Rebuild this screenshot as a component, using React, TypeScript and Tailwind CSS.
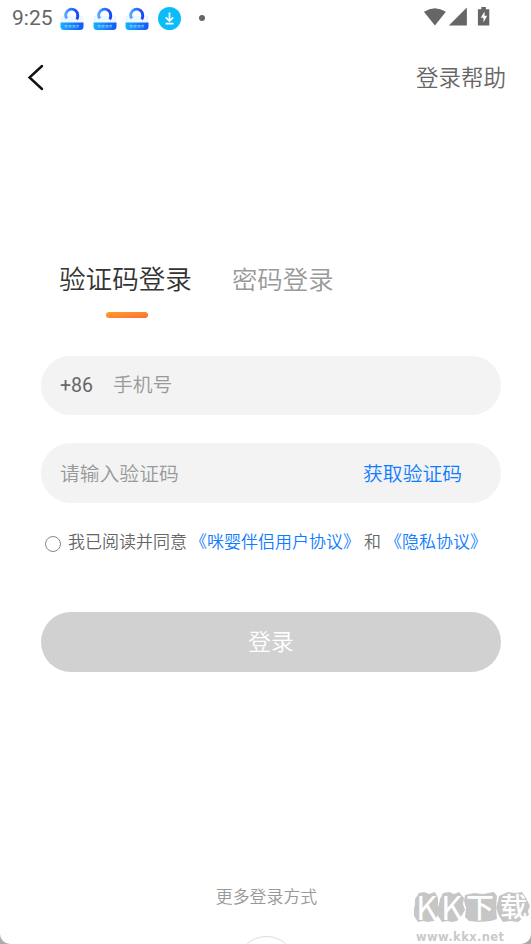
import { useState } from "react";

// Ícone do app que aparece nas notificações
function AppBadge() {
  return (
    <svg width="24" height="24" viewBox="0 0 24 24">
      <defs>
        <linearGradient id="arc" x1="0" y1="0" x2="1" y2="0">
          <stop offset="0" stopColor="#5aa6ff" />
          <stop offset="0.4" stopColor="#2f7bff" />
          <stop offset="1" stopColor="#1546f5" />
        </linearGradient>
        <linearGradient id="base" x1="0" y1="0" x2="1" y2="0">
          <stop offset="0" stopColor="#12b4ff" />
          <stop offset="1" stopColor="#1557f5" />
        </linearGradient>
      </defs>
      <rect x="0.5" y="9" width="23" height="8" fill="#eef7fd" />
      <path
        d="M6.7 11.5a6 6 0 1 1 11-3.200q0.200 2.500-1 4"
        fill="none"
        stroke="url(#arc)"
        strokeWidth="2.9"
      />
      <path d="M0.5 15.500h23v4a3.500 3.500 0 0 1-3.500 3.500H4a3.500 3.500 0 0 1-3.500-3.500z" fill="url(#base)" />
      <path
        d="M4.500 18.600h3M5 20h2.500M8.500 18.600h3M8.500 20h3M12.500 18.600h3M12.500 20h3M16.500 18.600h2.500M16.500 20h2"
        stroke="#a9d2ff"
        strokeWidth="0.8"
      />
    </svg>
  );
}

function StatusBar() {
  return (
    <div className="flex h-[37px] shrink-0 items-center pl-3 pr-[40px] text-[#666]">
      <span className="w-[48px] text-[21px] font-normal leading-[37px] font-[Roboto]">9:25</span>
      <div className="flex items-center gap-[8.5px]">
        <AppBadge />
        <AppBadge />
        <AppBadge />
        <svg width="24" height="24" viewBox="0 0 24 24">
          <circle cx="11.500" cy="11.500" r="11.500" fill="#0bbcfb" />
          <path
            d="M11.500 5.500v8.500M7.800 10.400l3.700 3.700 3.700-3.700M7.500 16.600h8"
            fill="none"
            stroke="#fff"
            strokeWidth="1.7"
          />
        </svg>
      </div>
      <span className="ml-[17px] -mt-0.5 size-1.5 rounded-full bg-[#666]" />
      <svg className="ml-auto -mt-[1px]" width="68" height="22" viewBox="0 0 68 22" fill="#666">
        <path d="M0.900 4.700q11-7 22 0L11.900 18.500z" />
        <path d="M43.900 0.500v18h-18z" />
        <path d="M54.900 2.200h3.400V0h4.600v2.200h3.400V18.500H54.900z" />
        <path d="M61.500 4.500v4.300h2.600l-3.600 6.700v-4.700h-2.700z" fill="#fff" />
      </svg>
    </div>
  );
}

function Watermark() {
  return (
    <div className="absolute left-[414px] top-[890px] w-[117px]">
      <svg width="117" height="36" viewBox="0 0 117 36" fill="#c6c6c6">
        <path d="M1 9l4-6 5-1 5 2 6-2 3 6v6l2 6-2 5-4 6-6 1-5-1-5 1-4-6v-7l1-5z" />
        <path d="M26 9l3-6 6-1 5 2 5-2 5 6-1 6 2 6-3 5-5 6-5 1-5-1-5 1-4-6 1-7v-5z" />
        <path d="M51 5l9-2 9 1 11-2 3 4-1 12 1 11-6 2-12 1-10-1-4-4 1-9-2-7z" />
        <path d="M85 6l9-4 7 1 7-1 4 6 4 8-2 5 1 4-6 3-5 4-8-1-7 1-4-6-3-8 2-7z" />
      </svg>
      <div className="absolute top-[-2px] left-[2px] flex h-[36px] items-center font-['Noto_Sans_CJK_SC',sans-serif] leading-[36px] text-white">
        <span className="w-[25px] text-[33px] font-normal">K</span>
        <span className="w-[25px] text-[33px] font-normal">K</span>
        <span className="w-[34px] text-[28px] font-medium">下</span>
        <span className="text-[27px] font-medium">载</span>
      </div>
      <p className="mt-[4px] ml-[2px] text-[11.5px] font-bold leading-[14px] tracking-[0.4px] text-[#cacaca] font-['DejaVu_Sans',sans-serif]">
        www.kkx.net
      </p>
    </div>
  );
}

export default function App() {
  const [agreed, setAgreed] = useState(false);
  const [phone, setPhone] = useState("");
  const [code, setCode] = useState("");

  return (
    <div className="bg-[#aaa]">
      <div className="relative flex h-[944px] w-[531px] flex-col overflow-hidden rounded-b-[10px] bg-white font-['Noto_Sans_CJK_SC',sans-serif] font-[350]">
        <StatusBar />

        <header className="flex h-[80px] shrink-0 items-center justify-between pl-[26px] pr-[25px]">
          <svg width="20" height="28" viewBox="0 0 20 28" fill="none" stroke="#111" strokeWidth="2.4">
            <path d="M16 3L3.500 14.500L16 26" strokeLinecap="round" />
          </svg>
          <span className="-mt-[2px] text-[22.5px] leading-8 text-[#666]">登录帮助</span>
        </header>

        <div className="mt-[141px] flex items-start pl-[59px]">
          <div className="flex flex-col items-center">
            <span className="text-[26.6px] leading-[40px] text-[#333]">验证码登录</span>
            <span className="mt-[14px] ml-[3px] h-1.5 w-[42px] rounded-full bg-linear-to-br from-[#ffa01e] to-[#ff6a3a]" />
          </div>
          <span className="ml-[40px] text-[25.4px] leading-[40px] text-[#999]">密码登录</span>
        </div>

        <div className="mt-[38px] flex flex-col pl-[41px] pr-[30px]">
          <div className="flex h-[59px] items-center rounded-full bg-[#f3f3f3] pl-[19px]">
            <span className="w-[53px] text-[19.5px] font-normal text-[#666] font-[Roboto]">+86</span>
            <input
              value={phone}
              onChange={(e) => setPhone(e.target.value)}
              placeholder="手机号"
              className="min-w-0 flex-1 pb-[3px] text-[19.8px] text-[#333] outline-none placeholder:text-[#999]"
            />
          </div>

          <div className="mt-[28px] flex h-[60px] items-center rounded-full bg-[#f3f3f3] pl-[19px] pr-[39px]">
            <input
              value={code}
              onChange={(e) => setCode(e.target.value)}
              placeholder="请输入验证码"
              className="min-w-0 flex-1 pb-px text-[19.8px] text-[#333] outline-none placeholder:text-[#999]"
            />
            <button className="pb-px text-[19.8px] text-[#0f7bff]">获取验证码</button>
          </div>

          <div className="mt-[26px] flex h-6 items-center whitespace-pre pl-1 text-[17px] leading-6 text-[#666]">
            <button
              onClick={() => setAgreed(!agreed)}
              className={`mt-[5px] mr-[7px] size-4 rounded-full border ${
                agreed ? "border-[#0f7bff] bg-[#0f7bff]" : "border-[#888]"
              }`}
            />
            <span>我已阅读并同意</span>
            <span className="ml-[3px] text-[#0f7bff]">《咪婴伴侣用户协议》</span>
            <span className="ml-[4px]">和</span>
            <span className="ml-[4px] text-[#0f7bff]">《隐私协议》</span>
          </div>

          <button className="mt-[59px] h-[60px] rounded-full bg-[#d1d1d1] pb-px text-[22.7px] text-white">
            登录
          </button>
        </div>

        <div className="mt-[212px] flex flex-col items-center pl-[2px]">
          <span className="text-[16.9px] leading-6 text-[#999]">更多登录方式</span>
          <span className="mt-[28px] size-[59px] shrink-0 rounded-full border border-[#ddd]" />
        </div>

        <Watermark />
      </div>
    </div>
  );
}
